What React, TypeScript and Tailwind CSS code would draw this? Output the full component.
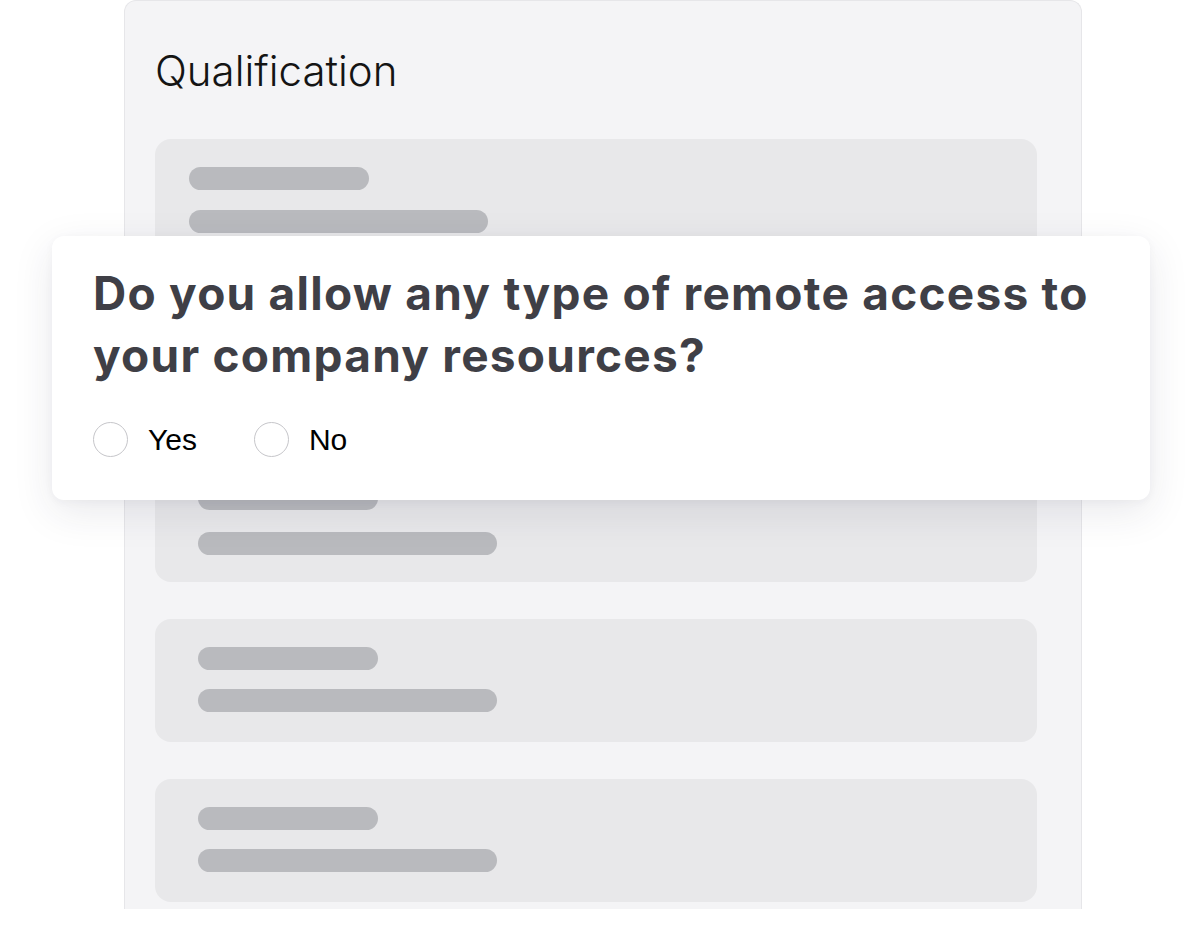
const SkeletonBar = ({ wide }: { wide?: boolean }) => (
  <div className={`h-[23px] rounded-full bg-[#b9babe] ${wide ? 'w-[299px]' : 'w-[180px]'}`} />
)

const SkeletonCard = () => (
  <div className="flex flex-col gap-[19px] rounded-2xl bg-[#e8e8ea] px-[43px] pb-[30px] pt-[28px]">
    <SkeletonBar />
    <SkeletonBar wide />
  </div>
)

const RadioOption = ({ label }: { label: string }) => (
  <label className="flex items-center gap-[20px]">
    <span className="h-[35px] w-[35px] rounded-full border-[1.5px] border-[#c6c6ca] bg-white" />
    <span className="text-[30px] leading-none text-black [font-family:'Liberation_Sans',Arial,sans-serif]">
      {label}
    </span>
  </label>
)

export default function App() {
  return (
    <div className="relative min-h-[941px] w-full overflow-hidden bg-white">
      <div className="ml-[124px] flex h-[909px] w-[958px] flex-col rounded-t-xl border border-b-0 border-[#e6e6e9] bg-[#f4f4f6] pl-[30px] pr-[44px] pt-[46px]">
        <h2 className="mb-[44px] text-[42px] font-light leading-[48px] text-[#141414] [font-family:Inter,'Noto_Sans',sans-serif]">
          Qualification
        </h2>
        <div className="flex flex-col gap-[37px]">
          <div className="flex h-[443px] flex-col justify-between rounded-2xl bg-[#e8e8ea] pb-[27px] pt-[28px]">
            <div className="flex flex-col gap-[20px] px-[34px]">
              <SkeletonBar />
              <SkeletonBar wide />
            </div>
            <div className="flex flex-col gap-[22px] px-[43px]">
              <SkeletonBar />
              <SkeletonBar wide />
            </div>
          </div>
          <SkeletonCard />
          <SkeletonCard />
        </div>
      </div>

      <div className="absolute left-[52px] top-[236px] h-[264px] w-[1098px] rounded-xl bg-white px-[41px] pt-[26px] shadow-[0_12px_40px_rgba(40,40,70,0.10),0_2px_8px_rgba(40,40,70,0.04)]">
        <p className="whitespace-nowrap text-[46px] font-bold leading-[62px] tracking-[0.027em] text-[#3f3f46] [font-family:Inter,'Noto_Sans',sans-serif]">
          Do you allow any type of remote access to
          <br />
          your company resources?
        </p>
        <div className="mt-[36px] flex items-center gap-[57px]">
          <RadioOption label="Yes" />
          <RadioOption label="No" />
        </div>
      </div>
    </div>
  )
}
